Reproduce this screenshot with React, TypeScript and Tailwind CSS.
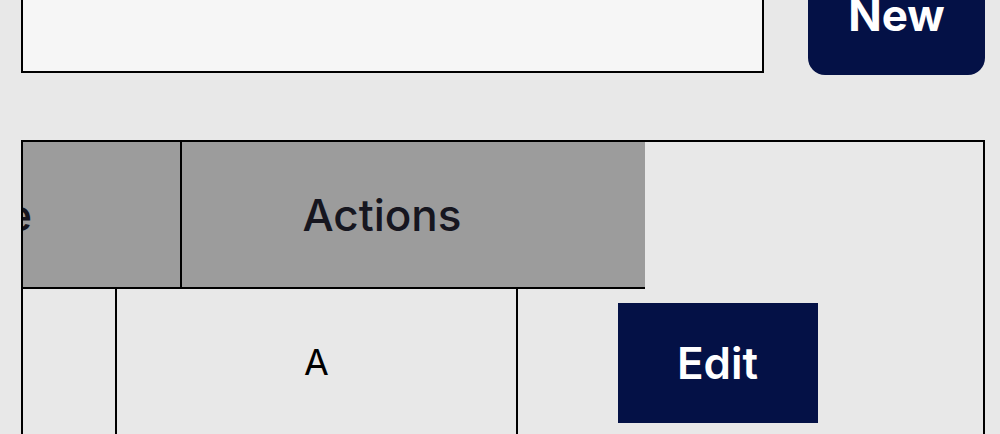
import React from 'react';

const rows = [{ id: 1, name: 'A' }];

export default function App() {
  return (
    <div
      className="min-h-[434px] w-[1000px] overflow-hidden bg-[#e8e8e8] pl-[21px] pr-[15px]"
      style={{ fontFamily: 'Inter, "Noto Sans", sans-serif' }}
    >
      <div className="-mt-[45px] flex items-start gap-[44px]">
        <input
          type="text"
          className="h-[118px] flex-1 border-2 border-black bg-[#f6f6f6] outline-none"
        />
        <button className="flex h-[120px] w-[177px] items-center justify-center rounded-[17px] bg-[#041146] text-[44px] font-bold text-white">
          New
        </button>
      </div>

      <div className="mt-[65px] h-[400px] border-2 border-black">
        <div className="flex h-[147px] w-[622px] border-b-2 border-black bg-[#9c9c9c] text-[44px] font-medium text-[#16161f]">
          <div className="flex w-[159px] items-center overflow-hidden border-r-2 border-black">
            <span className="-ml-[114px] whitespace-nowrap">Name</span>
          </div>
          <div className="flex w-[400px] items-center justify-center">Actions</div>
        </div>
        {rows.map((row) => (
          <div key={row.id} className="flex h-[160px]">
            <div className="w-[94px] border-r-2 border-black" />
            <div className="flex w-[401px] items-center justify-center border-r-2 border-black pb-[14px] text-[36px] text-black">
              {row.name}
            </div>
            <div className="flex w-[399px] items-start justify-center pt-[14px]">
              <button className="flex h-[120px] w-[200px] items-center justify-center bg-[#041146] text-[44px] font-semibold text-white">
                Edit
              </button>
            </div>
          </div>
        ))}
      </div>
    </div>
  );
}
